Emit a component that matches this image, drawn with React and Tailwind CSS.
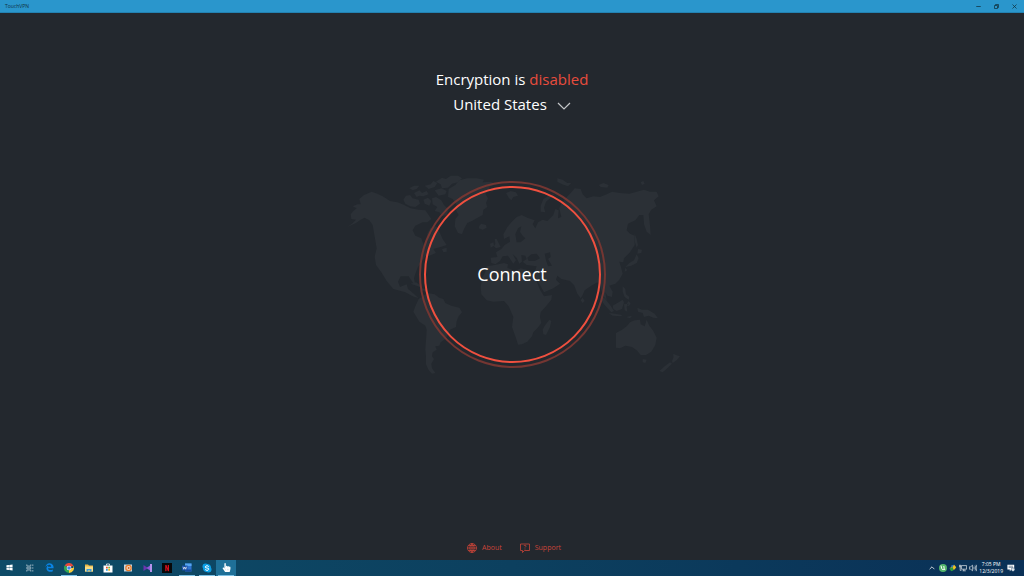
import React, { useState } from 'react';
import { FaWindows, FaEdgeLegacy, FaHandPointer } from 'react-icons/fa';

function WorldMap() {
  return (
    <svg viewBox="0 0 1032 657" className="col-start-1 row-start-1 w-[344px] text-[#2b3036]" fill="currentColor" fillRule="evenodd" aria-hidden="true">
      {/* North and Central America */}
      <path d="M22 186L36 176 48 164 34 162 32 148 40 138 50 130 38 124 52 118 62 118 58 102 72 90 95 80 112 86 128 94 150 108 172 112 188 118 212 130 236 134 256 136 266 150 274 162 262 172 248 172 226 182 218 196 226 212 244 220 250 238 258 226 262 206 272 188 288 184 300 204 308 222 320 240 302 246 280 252 288 264 268 272 256 274 246 288 234 306 226 326 222 340 226 362 218 352 206 334 182 334 174 350 180 366 200 358 204 372 216 382 236 400 218 394 196 382 160 372 140 348 124 322 108 300 104 275 110 250 104 215 98 180 88 166 74 158 62 164 48 174z" />
      {/* Arctic islands */}
      <path d="M190 104l8-12 12-2 8 10 18 4 4 12-14 10-16-2-14-8zM208 70l14-8 16 0-8 10-12 4zM222 84l16-8 8 8 14-6 6 10-16 6-12-2-8 4zM254 62l18-4 8-10 12 6-8 12-18 6zM250 104l14-6 10 10-6 14-14-6zM276 100l12-4 16 10 8 14 14 14-6 16-14 4-8-12-14-4 8-12-14-8zM284 76l20-6 16 8-4 10-20 4zM288 50l18-12 12 4 14-10 22 0 12 8-12 12-18 4-12 12-18 2-4-12zM306 252l14-4 0 12-10 2z" />
      {/* Greenland and Iceland */}
      <path d="M326 72l20-12 12-14 24-6 28 0 22 4-4 8 24-2 18 8-20 6-4 14-10 8 8 14-6 14 4 12-12 8-2 16-18 10-14 8-14 6-10 18-6 16-12-4-10-20 2-22 10-12-8-14 2-16-12-18-14-6zM418 182l6-6 14 4 2 8-12 6-12-4z" />
      {/* Cuba and Hispaniola */}
      <path d="M212 356l16-4 16 10-4 4zM244 370l14 2-2 6-12-2z" />
      {/* South America */}
      <path d="M236 402l14-10 14-8 20 4 14 10 12 4 6 12 18 8 24 6 8 14-10 12-6 14-2 18-18 8-6 14-8 14-14 10-4 10-12 2 4 10-12 8-2 12 6 8-8 14 2 14 10 14-10 2-10-10-8-18 0-22-2-24 2-26 2-32-4-12-18-12-10-16-8-14 6-16z" />
      {/* Africa and Madagascar */}
      <path d="M440 304L464 300 492 294 504 298 502 308 524 318 542 310 574 318 586 340 600 374 612 394 636 390 634 404 618 424 602 442 600 456 604 474 592 490 580 502 576 514 562 530 546 538 534 539 528 520 516 486 520 456 506 424 492 408 460 410 440 406 424 388 422 366 426 340 436 320zM614 482l14-18 6 4-4 18-12 24-8-2-2-14z" />
      {/* Europe and Asia, with the Black and Caspian seas cut out */}
      <path d="M454 294L452 278 472 276 468 262 484 252 494 240 510 230 508 214 492 222 490 208 502 186 514 172 530 156 545 150 562 158 584 166 578 178 586 190 594 172 608 164 622 168 640 150 646 132 656 136 654 160 664 156 658 130 666 112 678 98 692 84 704 70 722 72 728 88 740 100 760 94 780 96 800 88 816 80 840 84 868 86 890 80 912 74 930 80 950 80 956 94 942 106 950 124 934 134 926 148 930 180 932 210 920 200 912 178 910 150 898 150 886 166 864 176 860 196 870 206 884 212 884 240 870 262 852 280 850 292 838 290 844 310 848 326 838 344 826 356 808 362 818 380 816 396 802 392 796 382 800 406 790 394 782 370 772 352 754 362 734 376 728 390 722 400 712 386 702 360 690 348 664 342 652 332 648 344 660 356 640 370 612 382 600 360 588 340 584 322 590 304 560 300 548 290 560 282 556 272 544 270 546 290 538 296 530 278 518 268 528 286 520 296 504 272 488 274 480 288 466 298zM562 278L574 268 590 266 600 280 584 288 566 288zM614 266L630 262 632 276 624 282 636 302 624 304 618 286zM530 232L526 208 534 190 544 184 540 200 548 212 556 220 542 232z" />
      {/* British Isles, Svalbard, Novaya Zemlya and the polar coast islands */}
      <path d="M464 222l6 0 6 12 6 12-14 4-6-6 4-8zM450 236l10-4 2 10-10 6zM498 84l14-6 16 4 6 10-14 4-6 10-8-8zM602 140l0-18 8-20 20-12 14-4-12 12-14 12-6 18 4 14zM652 40l16 4 14 10 12 0-10 10-18-6-14-8zM776 60l14-6 16 6-4 8-20-2zM902 52l8-4 4 8-8 4z" />
      {/* Japan, Philippines and Indonesia */}
      <path d="M884 206l6 16 4 18-4 8-6-20zM894 252l12 2-2 10-12 2zM890 268l6 12-6 14-16 8-18 4 12-12 14-8zM856 308l6 8-8 4zM728 398l6 10-6 6-6-8zM848 364l8 8 2 16 10 8-2 8-12-8-6-16zM866 408l6 8-6 8-6-8zM782 390l14 12 16 20 10 16-8 4-18-20-14-18zM806 444l20 2 20 4-2 4-26-2zM818 422l14-8 16-10 4 8-6 20-16 6-10-6zM852 418l14-2-6 10 2 14-8-4zM858 456l18-4-6 8zM892 428l14 6 18 0 20 12 10 14-14-2-14-6-14 4-4-12-14-4z" />
      {/* Australia and New Zealand */}
      <path d="M828 504L846 494 860 484 870 472 884 466 900 464 902 478 914 484 920 464 928 482 940 498 950 518 946 540 934 560 918 570 902 570 890 556 876 546 856 542 840 550 828 548zM908 582l12 2-4 10-8-2zM1000 566l8 4 12 4-10 12-12 8-2-6 4-10zM990 592l6 4-14 14-14 12-10-4 16-14z" />
    </svg>
  );
}

function Glyph({ children, className = 'size-2.5' }) {
  return (
    <svg viewBox="0 0 20 20" className={className} aria-hidden="true">
      {children}
    </svg>
  );
}

const taskbarItems = [
  { name: 'Start', icon: <FaWindows className="size-[7px] text-white" /> },
  {
    name: 'Task View',
    icon: (
      <Glyph className="size-2">
        <path d="M2 1v4h10V1M2 19v-4h10v4M2 8h10v4H2zM17 1v4M17 8v4M17 15v4" fill="none" stroke="#b9cbd5" strokeWidth="1.8" />
      </Glyph>
    ),
  },
  { name: 'Microsoft Edge', icon: <FaEdgeLegacy className="size-[9px] text-[#0a84e4]" /> },
  {
    name: 'Google Chrome',
    open: true,
    icon: (
      <Glyph>
        <path d="M10 10L1.3 5A10 10 0 0 1 18.7 5z" fill="#e5493a" />
        <path d="M10 10L1.3 5A10 10 0 0 0 10 20z" fill="#2fa653" />
        <path d="M10 10h8.7V5A10 10 0 0 1 10 20z" fill="#f7cb3c" />
        <circle cx="10" cy="10" r="4.6" fill="#fff" />
        <circle cx="10" cy="10" r="3.6" fill="#4285e8" />
      </Glyph>
    ),
  },
  {
    name: 'File Explorer',
    icon: (
      <Glyph>
        <path d="M2 3h6l2 2h8v12H2z" fill="#e9b546" />
        <path d="M2 7h16v10H2z" fill="#fadd84" />
        <path d="M5 17v-5h10v5h-3v-2H8v2z" fill="#3e9bdc" />
      </Glyph>
    ),
  },
  {
    name: 'Microsoft Store',
    icon: (
      <Glyph>
        <path d="M7 5V2h6v3" fill="none" stroke="#fff" strokeWidth="1.5" />
        <path d="M1 5h18v14H1z" fill="#fff" />
        <path d="M6 7.5h3.5V11H6z" fill="#e8502c" />
        <path d="M10.5 7.5H14V11h-3.5z" fill="#7fb83b" />
        <path d="M6 12h3.5v3.5H6z" fill="#2b9fe0" />
        <path d="M10.5 12H14v3.5h-3.5z" fill="#f4b51d" />
      </Glyph>
    ),
  },
  {
    name: 'Media Player',
    icon: (
      <Glyph>
        <path d="M2 3h16v14H2z" fill="#c7d5df" />
        <circle cx="11" cy="10" r="6.5" fill="#e87b28" />
        <circle cx="11" cy="10" r="4" fill="#f8e9dc" />
        <path d="M9.5 7l5 3-5 3z" fill="#d8641c" />
      </Glyph>
    ),
  },
  {
    name: 'Visual Studio',
    icon: (
      <Glyph>
        <path d="M1 4l9 6-9 6z" fill="#6a35b0" />
        <path d="M18 2v16l-11-8z" fill="#8c5bd6" />
        <path d="M14 2h4v16h-4z" fill="#b692ec" />
      </Glyph>
    ),
  },
  {
    name: 'Netflix',
    icon: (
      <Glyph>
        <path d="M0 0h20v20H0z" fill="#080808" />
        <path d="M6.5 4H9l2.5 7V4H14v12.5l-2.5-.5L9 9v7.2l-2.5.3z" fill="#d5101d" />
      </Glyph>
    ),
  },
  {
    name: 'Word',
    open: true,
    icon: (
      <Glyph>
        <path d="M6 1h13v16H6z" fill="#2f74d0" />
        <path d="M6 1h13v5H6z" fill="#55a5ef" />
        <path d="M6 13h13v4H6z" fill="#164b9c" />
        <path d="M0 5h11v10H0z" fill="#174fa5" />
        <path d="M2 7.5l1.500 5 2-4.500 2 4.500 1.500-5" fill="none" stroke="#fff" strokeWidth="1.3" />
      </Glyph>
    ),
  },
  {
    name: 'Skype',
    open: true,
    icon: (
      <Glyph>
        <circle cx="7" cy="7" r="6" fill="#0a9fe6" />
        <circle cx="13" cy="13" r="6" fill="#0a9fe6" />
        <circle cx="10" cy="10" r="8" fill="#0a9fe6" />
        <path d="M13.5 7.5q-1-2-3.500-2t-3.500 2.200 3.500 2.300 3.500 2.500-3.500 2.200-3.700-2" fill="none" stroke="#fff" strokeWidth="2" />
      </Glyph>
    ),
  },
  { name: 'TouchVPN', open: true, active: true, icon: <FaHandPointer className="size-[9px] text-white" /> },
];

function Taskbar() {
  return (
    <footer className="flex h-4 items-stretch justify-between bg-linear-to-r from-[#0e4b67] via-[#0c405f] to-[#0a3056]">
      <nav className="flex w-[236px]">
        {taskbarItems.map((item) => (
          <button
            key={item.name}
            type="button"
            aria-label={item.name}
            className={`flex flex-1 items-center justify-center ${item.active ? 'bg-[#1f7098]' : ''}`}
          >
            <span className={`flex h-4 w-4 items-center justify-center border-b ${item.open ? 'border-[#7cc0e4]' : 'border-transparent'}`}>
              {item.icon}
            </span>
          </button>
        ))}
      </nav>
      <div className="flex items-center gap-0.5 pr-[9px] text-white">
        <button type="button" aria-label="Show hidden icons" className="mr-0.5">
          <Glyph className="size-[6px]">
            <path d="M2 14l8-8 8 8" fill="none" stroke="currentColor" strokeWidth="2.5" />
          </Glyph>
        </button>
        <button type="button" aria-label="uTorrent">
          <Glyph className="size-2">
            <circle cx="10" cy="10" r="10" fill="#52b56b" />
            <path d="M5 4l2 8c1 3 5 3 6 0l-1-7M13 12l2 3" fill="none" stroke="#fff" strokeWidth="2.5" />
          </Glyph>
        </button>
        <button type="button" aria-label="Download manager">
          <Glyph className="size-2">
            <path d="M4 8l9-6 5 6-4 6-9 1z" fill="#f0bf24" />
            <path d="M1 10l9-2 1 8-6 2z" fill="#2c9b3f" />
            <path d="M6 3l6-1-3 6H5z" fill="#2e70bd" />
          </Glyph>
        </button>
        <button type="button" aria-label="Network">
          <Glyph className="size-2">
            <path d="M6 4h13v9H6zM12 13v4M9 17h8M1 3h3v4H1zM3 7v9h3" fill="none" stroke="currentColor" strokeWidth="1.6" />
          </Glyph>
        </button>
        <button type="button" aria-label="Volume">
          <Glyph className="size-2">
            <path d="M1 7h3l5-4v14l-5-4H1zM12 7q2 3 0 6M15 4q4 6 0 12M18 2q4 8 0 16" fill="none" stroke="currentColor" strokeWidth="1.5" />
          </Glyph>
        </button>
        <time className="text-center text-[5px] leading-[7px]">
          <span className="block">7:05 PM</span>
          <span className="block">12/3/2019</span>
        </time>
        <button type="button" aria-label="Notifications" className="ml-0.5">
          <Glyph className="size-2">
            <path d="M1 2h17v12h-7l-4 4v-4H1z" fill="currentColor" />
            <path d="M4 5.5h11M4 8.5h11" stroke="#0a3056" strokeWidth="1.2" />
            <circle cx="15" cy="14" r="4.5" fill="#dce6ee" stroke="#0a3056" />
          </Glyph>
        </button>
      </div>
    </footer>
  );
}

export default function App() {
  const [connected, setConnected] = useState(false);

  return (
    <div className="flex min-h-screen flex-col bg-[#23282e] font-['Open_Sans','Noto_Sans',sans-serif] text-white">
      <header className="flex h-[13px] items-center justify-between border-b border-[#2382b2] bg-[#2a96cc] pr-px pl-[5px] text-[#10313f]">
        <span className="text-[5px] leading-[7px]">TouchVPN</span>
        <div className="flex">
          <button type="button" aria-label="Minimize" className="flex w-[18px] justify-center">
            <Glyph className="size-[5px]">
              <path d="M1 10h18" stroke="currentColor" strokeWidth="3" />
            </Glyph>
          </button>
          <button type="button" aria-label="Restore" className="flex w-[18px] justify-center">
            <Glyph className="size-[5px]">
              <path d="M2 6h12v12H2zM6 6V2h12v12h-4" fill="none" stroke="currentColor" strokeWidth="3" />
            </Glyph>
          </button>
          <button type="button" aria-label="Close" className="flex w-[18px] justify-center">
            <Glyph className="size-[5px]">
              <path d="M2 2l16 16M18 2L2 18" stroke="currentColor" strokeWidth="3" />
            </Glyph>
          </button>
        </div>
      </header>

      <main className="flex flex-1 flex-col items-center pt-[54px]">
        <h1 className="text-[15px] leading-[25px]">
          Encryption is <span className="text-[#e84c3d]">{connected ? 'enabled' : 'disabled'}</span>
        </h1>
        <button type="button" className="flex items-center gap-2.5 text-[15px] leading-[25px]">
          United States
          <svg viewBox="0 0 14 8" className="mt-0.5 w-3.5" fill="none" stroke="#c4c7c9" strokeWidth="1.2" aria-hidden="true">
            <path d="M1 1l6 6 6-6" />
          </svg>
        </button>

        <div className="mt-12 grid place-items-center">
          <WorldMap />
          <button
            type="button"
            onClick={() => setConnected(!connected)}
            className="z-10 col-start-1 row-start-1 size-[187px] rounded-full border-2 border-[#743632] p-[3px]"
          >
            <span className="flex size-full items-center justify-center rounded-full border-2 border-[#f0503f] pb-0.5 text-lg">
              {connected ? 'Disconnect' : 'Connect'}
            </span>
          </button>
        </div>

        <nav className="mt-auto flex gap-[18px] pb-1 pl-1 text-[7px] leading-4 text-[#c94439]">
          <a href="#about" className="flex items-center gap-[5px]">
            <Glyph>
              <path d="M10 1a9 9 0 1 0 0 18a9 9 0 1 0 0-18M10 1v18M1 10h18M10 1q-9 9 0 18M10 1q9 9 0 18M3 5h14M3 15h14" fill="none" stroke="currentColor" strokeWidth="1.6" />
            </Glyph>
            About
          </a>
          <a href="#support" className="flex items-center gap-[5px]">
            <Glyph>
              <path d="M1 2h18v13h-10l-4 4v-4H1z" fill="none" stroke="currentColor" strokeWidth="1.6" />
              <path d="M8 6q0-1.500 2-1.500t2 1.500-2 3M10 11v2" fill="none" stroke="currentColor" strokeWidth="1.5" />
            </Glyph>
            Support
          </a>
        </nav>
      </main>

      <Taskbar />
    </div>
  );
}
